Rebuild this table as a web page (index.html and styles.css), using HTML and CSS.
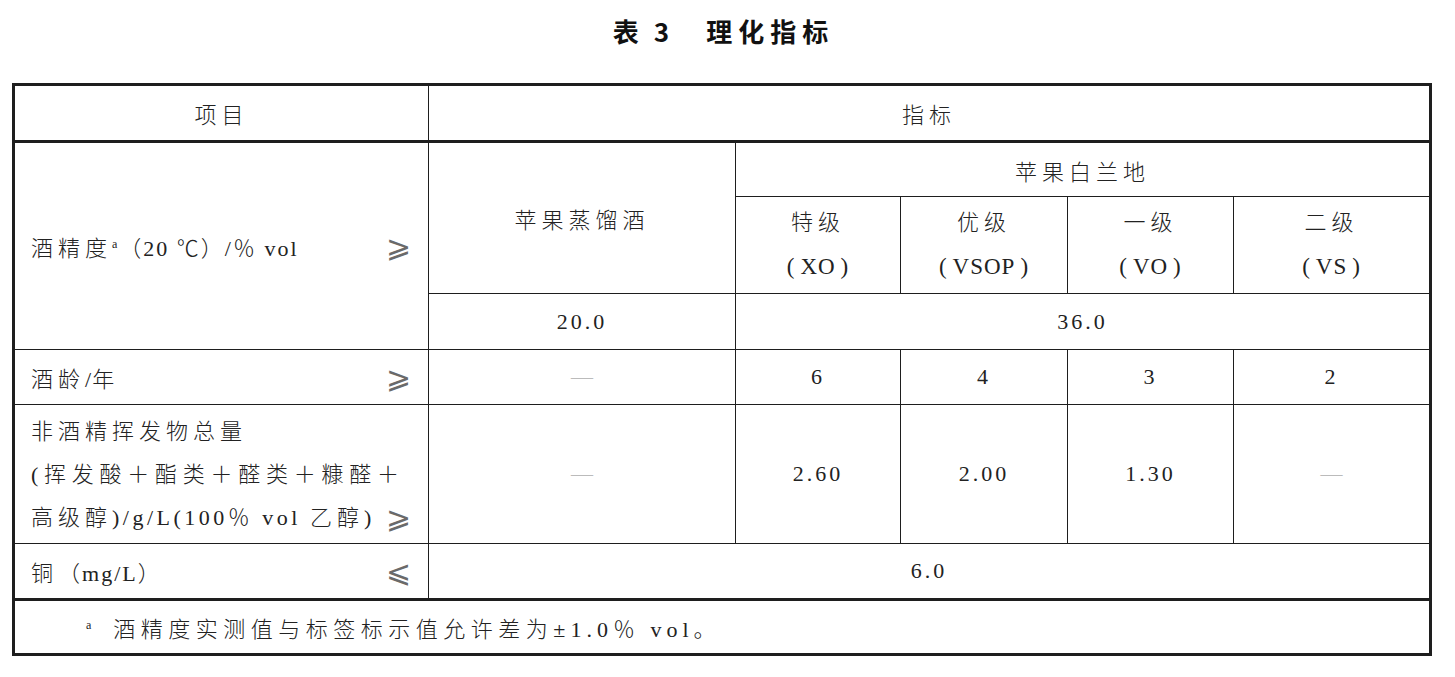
FILE: index.html
```html
<!DOCTYPE html>
<html lang="zh">
<head>
<meta charset="utf-8">
<title>表 3 理化指标</title>
<link rel="stylesheet" href="styles.css">
</head>
<body>
<div class="page">
  <h1 class="title"><span>表</span><span class="title-num">3</span><span class="title-main">理化指标</span></h1>
  <table class="spec">
    <colgroup>
      <col class="c1"><col class="c2"><col class="c3"><col class="c4"><col class="c5"><col class="c6">
    </colgroup>
    <tr class="r-head">
      <td>项目</td>
      <td colspan="5">指标</td>
    </tr>
    <tr class="r-brandy">
      <td rowspan="3" class="label"><div class="lab"><span>酒精度<sup>a</sup><span class="lt mid">（20 ℃）/％ vol</span></span><span class="op">⩾</span></div></td>
      <td rowspan="2">苹果蒸馏酒</td>
      <td colspan="4">苹果白兰地</td>
    </tr>
    <tr class="r-grade">
      <td class="two">特级<br><span class="lt grade">(<span class="in">XO</span>)</span></td>
      <td class="two">优级<br><span class="lt grade">(<span class="in">VSOP</span>)</span></td>
      <td class="two">一级<br><span class="lt grade">(<span class="in">VO</span>)</span></td>
      <td class="two">二级<br><span class="lt grade">(<span class="in">VS</span>)</span></td>
    </tr>
    <tr class="r-val">
      <td class="num">20.0</td>
      <td colspan="4" class="num">36.0</td>
    </tr>
    <tr class="r-age">
      <td class="label"><div class="lab"><span>酒龄<span class="lt">/</span>年</span><span class="op">⩾</span></div></td>
      <td class="dash">—</td>
      <td class="num">6</td>
      <td class="num">4</td>
      <td class="num">3</td>
      <td class="num">2</td>
    </tr>
    <tr class="r-vol">
      <td class="label">
        <div class="multi">
          <div>非酒精挥发物总量</div>
          <div class="just">(挥发酸＋酯类＋醛类＋糠醛＋</div>
          <div class="lab"><span>高级醇<span class="lt wide">)/g/L(100％ vol </span>乙醇<span class="lt wide">)</span></span><span class="op">⩾</span></div>
        </div>
      </td>
      <td class="dash">—</td>
      <td class="num">2.60</td>
      <td class="num">2.00</td>
      <td class="num">1.30</td>
      <td class="dash">—</td>
    </tr>
    <tr class="r-cu">
      <td class="label"><div class="lab"><span>铜<span class="lt mid">（mg/L）</span></span><span class="op">⩽</span></div></td>
      <td colspan="5" class="num">6.0</td>
    </tr>
    <tr class="r-note">
      <td colspan="6" class="note"><sup class="note-mark">a</sup>酒精度实测值与标签标示值允许差为<span class="lt foot">±1.0％ vol</span>。</td>
    </tr>
  </table>
</div>
</body>
</html>
```
FILE: styles.css
```css
html, body {
  margin: 0;
  padding: 0;
  background: #ffffff;
}

.page {
  width: 1455px;
  color: #222222;
  font-family: "Liberation Serif", "Noto Sans CJK SC", serif;
  text-spacing-trim: space-all;
}

.title {
  margin: 0;
  padding: 16px 8px 0 0;
  height: 30px;
  line-height: 30px;
  text-align: center;
  font-family: "Noto Sans CJK SC", sans-serif;
  font-weight: 700;
  font-size: 26px;
  letter-spacing: 6px;
  color: #111111;
}

.title-num {
  margin-left: 9px;
}

.title-main {
  margin-left: 31px;
}

.spec {
  margin: 37px 0 0 12px;
  border-collapse: collapse;
  table-layout: fixed;
  width: 1419px;
  border: 3px solid #1e1e1e;
  font-size: 22px;
  letter-spacing: 5px;
}

.c1 { width: 415px; }
.c2 { width: 307px; }
.c3 { width: 165px; }
.c4 { width: 167px; }
.c5 { width: 166px; }
.c6 { width: 197px; }

.spec td {
  border: 1px solid #1e1e1e;
  padding: 0;
  text-align: center;
  vertical-align: middle;
  font-weight: 300;
  font-family: "Liberation Serif", "Noto Sans CJK SC", serif;
}

.r-head { height: 57px; }
.r-head td { border-bottom: 3px solid #1e1e1e; }
.r-brandy { height: 55px; }
.r-grade { height: 97px; }
.r-val { height: 56px; }
.r-age { height: 55px; }
.r-vol { height: 139px; }
.r-cu { height: 56px; }
.r-note { height: 55px; }
.r-note td { border-top: 3px solid #1e1e1e; }

.two {
  line-height: 44px;
}

.lt {
  letter-spacing: 1px;
}

.lt.grade {
  font-size: 23px;
}

.lt.mid {
  letter-spacing: 2px;
}

.lt.wide {
  letter-spacing: 3.5px;
}

.lt.foot {
  letter-spacing: 5px;
}

.in {
  padding: 0 5px 0 5px;
}

.num {
  letter-spacing: 3px;
}

.dash {
  color: #bbbbbb;
  font-family: "Liberation Serif", serif;
  letter-spacing: 0;
}

.spec td.label {
  text-align: left;
}

.lab {
  display: flex;
  justify-content: space-between;
  align-items: center;
  padding: 0 17px 0 16px;
  white-space: nowrap;
}

.multi {
  padding: 0 17px 0 16px;
  line-height: 43px;
}

.multi .lab {
  padding: 0;
}

.just {
  text-align: justify;
  text-align-last: justify;
  padding-right: 10px;
  letter-spacing: 2px;
}

.op {
  font-family: "DejaVu Sans", sans-serif;
  font-size: 30px;
  letter-spacing: 0;
  color: #6a6a6a;
}

sup {
  font-size: 12px;
  vertical-align: 8px;
  line-height: 0;
  letter-spacing: 2px;
}

.spec td.note {
  text-align: left;
  padding-left: 71px;
  letter-spacing: 5.5px;
}

.note-mark {
  margin-right: 20px;
}
```
